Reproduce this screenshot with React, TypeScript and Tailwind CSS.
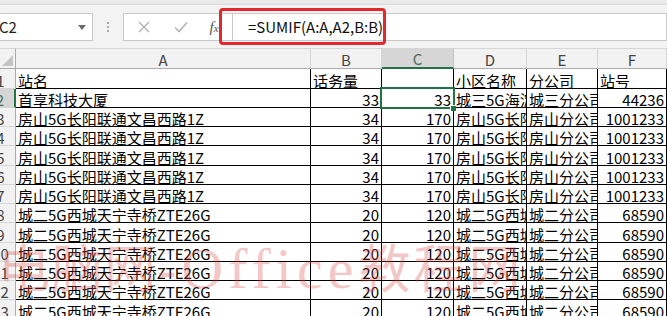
import React from "react";

const FONT = { fontFamily: '"Noto Sans CJK SC", "Noto Sans", sans-serif' };

type Row = { n: number; cells: string[] };

const rows: Row[] = [
  { n: 1, cells: ["站名", "话务量", "", "小区名称", "分公司", "站号"] },
  { n: 2, cells: ["首享科技大厦", "33", "33", "城三5G海淀区", "城三分公司", "44236"] },
  ...[3, 4, 5, 6, 7].map((n) => ({
    n,
    cells: ["房山5G长阳联通文昌西路1Z", "34", "170", "房山5G长阳联通", "房山分公司", "1001233"],
  })),
  ...[8, 9, 10, 11, 12, 13].map((n) => ({
    n,
    cells: ["城二5G西城天宁寺桥ZTE26G", "20", "120", "城二5G西城天宁", "城二分公司", "68590"],
  })),
];

const letters = ["A", "B", "C", "D", "E", "F"];

function isNum(s: string) {
  return /^\d+$/.test(s);
}

export default function App() {
  return (
    <div
      className="relative w-[667px] h-[316px] overflow-hidden bg-white text-[15px] text-black"
      style={FONT}
    >
      {/* Formula bar area */}
      <div className="relative h-[48px] bg-[#f3f3f3]">
        <div className="h-[5px] bg-[#e9e9e9] border-b border-[#dadada]" />
        <div className="flex items-start mt-[8px] h-[28px]">
          {/* Name box */}
          <div className="-ml-[6px] w-[99px] h-[28px] bg-white border border-[#c9c9c9] flex items-center justify-between pl-[4px] pr-[6px]">
            <span className="leading-[20px] text-[#222]">C2</span>
            <svg width="8" height="5" viewBox="0 0 8 5">
              <path d="M0 0 L8 0 L4 5 Z" fill="#6b6b6b" />
            </svg>
          </div>
          {/* dots */}
          <div className="w-[30px] h-[28px] flex flex-col items-center justify-center gap-[2px]">
            <div className="w-[2px] h-[2px] bg-[#a8a8a8]" />
            <div className="w-[2px] h-[2px] bg-[#a8a8a8]" />
            <div className="w-[2px] h-[2px] bg-[#a8a8a8]" />
          </div>
          {/* buttons */}
          <div className="w-[109px] h-[28px] bg-white border-y border-l border-[#c9c9c9] flex items-center">
            <div className="w-[38px] flex justify-center pl-[1px]">
              <svg width="12" height="12" viewBox="0 0 12 12">
                <path d="M1 1 L11 11 M11 1 L1 11" stroke="#b4b4b4" strokeWidth="1.4" />
              </svg>
            </div>
            <div className="w-[38px] flex justify-center">
              <svg width="14" height="12" viewBox="0 0 14 12">
                <path d="M1 6.5 L5 10.5 L13 1.5" stroke="#b4b4b4" strokeWidth="1.6" fill="none" />
              </svg>
            </div>
            <div
              className="flex-1 flex justify-center items-baseline italic text-[#555] pr-[4px]"
              style={{ fontFamily: '"Liberation Serif", serif' }}
            >
              <span className="text-[15px] leading-[16px]">f</span>
              <span className="text-[11px] leading-[12px]">x</span>
            </div>
          </div>
          {/* formula input */}
          <div className="flex-1 h-[28px] bg-white border border-[#c9c9c9] flex items-center pl-[15px]">
            <span className="leading-[20px] text-[#111]">=SUMIF(A:A,A2,B:B)</span>
          </div>
        </div>
        {/* red highlight box */}
        <div className="absolute left-[219px] top-[8px] w-[167px] h-[37px] border-[3px] border-[#e3282c] rounded-[4px]" />
      </div>

      {/* Grid */}
      <div className="relative">
        <div className="grid grid-cols-[16px_295px_71px_72px_73px_71px_1fr] grid-rows-[21px_20px_19px_19px_19px_20px_19px_19px_19px_20px_19px_19px_19px_20px]">
          {/* header row */}
          <div className="relative bg-[#f2f2f2] border-t border-[#d6d6d6] border-b border-b-[#ababab] border-r border-r-[#ababab] overflow-hidden">
            <svg className="absolute left-[2px] bottom-[2px]" width="11" height="11" viewBox="0 0 11 11">
              <path d="M11 0 L11 11 L0 11 Z" fill="#c4c4c4" />
            </svg>
          </div>
          {letters.map((l) => {
            const active = l === "C";
            return (
              <div
                key={l}
                className={
                  active
                    ? "flex items-end justify-center bg-[#d6d6d6] border-t border-[#d6d6d6] border-r border-r-[#c4c4c4] border-b-2 border-b-[#217346] text-[#4a6e5c] leading-[17px]"
                    : "flex items-end justify-center bg-[#f2f2f2] border-t border-[#d6d6d6] border-r border-r-[#d6d6d6] border-b border-b-[#ababab] text-[#444] leading-[17px]"
                }
              >
                {l}
              </div>
            );
          })}
          {rows.map((r) => (
            <React.Fragment key={r.n}>
              <div
                className={
                  r.n === 2
                    ? "flex items-end justify-end overflow-hidden bg-[#d6d6d6] border-b border-[#d6d6d6] border-r-2 border-r-[#217346] text-[#4a6e5c] leading-[14px]"
                    : "flex items-end justify-end overflow-hidden bg-[#f2f2f2] border-b border-[#d6d6d6] border-r border-r-[#ababab] text-[#444] leading-[14px]"
                }
              >
                <span className={"shrink-0 text-center " + (r.n === 2 ? "w-[28px]" : "w-[29px]")}>{r.n}</span>
              </div>
              {r.cells.map((c, i) => (
                <div
                  key={i}
                  className={
                    "flex items-end overflow-hidden whitespace-nowrap border-r border-b border-black px-[2px] leading-[14px] " +
                    (isNum(c) ? "justify-end" : "justify-start")
                  }
                >
                  <span className="shrink-0">{c}</span>
                </div>
              ))}
            </React.Fragment>
          ))}
        </div>

        {/* selection of C2 */}
        <div className="absolute left-[380px] top-[39px] w-[75px] h-[22px] border-2 border-[#217346]" />
        <div className="absolute left-[450px] top-[57px] w-[6px] h-[6px] bg-[#217346] border-l border-t border-white" />

        {/* watermark */}
        <div
          className="absolute left-[-2px] top-[192px] whitespace-nowrap leading-[58px] text-[rgba(220,70,70,0.3)] pointer-events-none"
          style={{ fontFamily: '"Liberation Serif", "Noto Sans CJK SC", serif' }}
        >
          <span className="text-[52px] tracking-[1px]">电脑网</span>
          <span className="text-[58px] tracking-[5px]">-Office</span>
          <span className="text-[52px] tracking-[3px]">教程网</span>
        </div>
      </div>
    </div>
  );
}
